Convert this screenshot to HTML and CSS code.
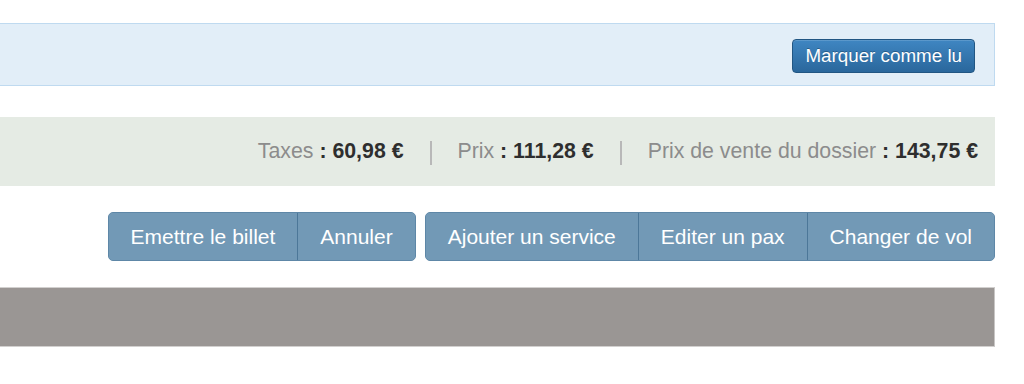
FILE: index.html
```html
<!DOCTYPE html>
<html lang="fr">
<head>
<meta charset="utf-8">
<title>Dossier</title>
<link rel="stylesheet" href="styles.css">
</head>
<body>
<div class="page">
  <div class="notice">
    <button class="btn-primary">Marquer comme lu</button>
  </div>
  <div class="totals">
    <span class="item"><span class="label">Taxes</span> <b>: 60,98 €</b></span>
    <span class="sep"></span>
    <span class="item"><span class="label">Prix</span> <b>: 111,28 €</b></span>
    <span class="sep"></span>
    <span class="item"><span class="label">Prix de vente du dossier</span> <b>: 143,75 €</b></span>
  </div>
  <div class="actions">
    <div class="btn-group">
      <button class="btn">Emettre le billet</button>
      <button class="btn">Annuler</button>
    </div>
    <div class="btn-group">
      <button class="btn">Ajouter un service</button>
      <button class="btn">Editer un pax</button>
      <button class="btn">Changer de vol</button>
    </div>
  </div>
  <div class="bar"></div>
</div>
</body>
</html>
```
FILE: styles.css
```css
html, body {
  margin: 0;
  padding: 0;
  background: #ffffff;
}
body {
  font-family: "Liberation Sans", Arial, sans-serif;
}
.page {
  width: 995px;
}
.notice {
  margin-top: 23px;
  height: 61px;
  box-sizing: content-box;
  border: 1px solid #bfdaf0;
  border-left: none;
  background: #e2eef8;
  display: flex;
  justify-content: flex-end;
  align-items: center;
  padding-right: 19px;
}
.btn-primary {
  margin-top: 3px;
  height: 34px;
  padding: 0 12px;
  font-family: inherit;
  font-size: 18.8px;
  color: #ffffff;
  background: linear-gradient(#3f86c2, #2a679c);
  border: 1px solid #215683;
  border-radius: 4px;
  text-shadow: 0 -1px 0 rgba(0, 0, 0, 0.25);
  box-shadow: inset 0 1px 0 rgba(255, 255, 255, 0.15);
}
.totals {
  margin-top: 31px;
  height: 69px;
  background: #e5ebe4;
  display: flex;
  justify-content: flex-end;
  align-items: center;
  padding-right: 17px;
  font-size: 21.3px;
  color: #2e2e2e;
}
.totals .label {
  color: #8c8c8c;
}
.totals b {
  font-weight: bold;
}
.sep {
  width: 2px;
  height: 24px;
  background: #b8b8b8;
  margin: 2px 26px 0;
}
.actions {
  margin-top: 26px;
  display: flex;
  justify-content: flex-end;
  gap: 9px;
}
.btn-group {
  display: flex;
  border: 1px solid #5e87a7;
  border-radius: 5px;
  overflow: hidden;
  background: #7299b6;
}
.btn {
  height: 47px;
  padding: 0 22px;
  font-family: inherit;
  font-size: 21px;
  color: #ffffff;
  background: #7299b6;
  border: none;
}
.btn + .btn {
  border-left: 1px solid #4c7798;
}
.bar {
  margin-top: 26px;
  height: 58px;
  background: #9a9694;
  border-top: 1px solid #d2d0cf;
  border-bottom: 1px solid #d2d0cf;
  border-right: 1px solid #c8c6c5;
}
```
